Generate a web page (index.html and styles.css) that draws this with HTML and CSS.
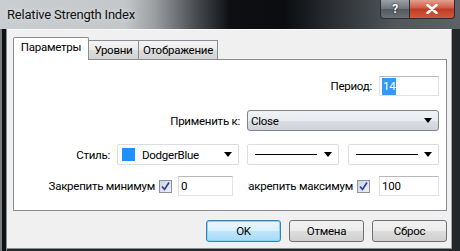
FILE: index.html
```html
<!DOCTYPE html>
<html lang="ru">
<head>
  <meta charset="UTF-8">
  <title>Relative Strength Index</title>
  <link rel="stylesheet" href="styles.css">
</head>
<body>
  <div class="window">
    <div class="titlebar">
      <span class="title">Relative Strength Index</span>
      <div class="caption-btns">
        <div class="cbtn help">?</div>
        <div class="cbtn close">
          <svg width="12" height="10" viewBox="0 0 12 10">
            <path d="M1.5 1 L10.5 9 M10.5 1 L1.5 9" stroke="#fff" stroke-width="2.6" stroke-linecap="round"/>
          </svg>
        </div>
      </div>
    </div>

    <div class="client">
      <div class="tabs">
        <div class="tab active tab-params">Параметры</div>
        <div class="tab tab-levels">Уровни</div>
        <div class="tab tab-view">Отображение</div>
      </div>

      <div class="panel">
        <div class="row row-period">
          <label class="lbl gap7">Период:</label>
          <div class="field w60"><span class="sel-text">14</span></div>
        </div>

        <div class="row row-apply">
          <label class="lbl gap7">Применить к:</label>
          <div class="combo combo-ro w192">
            <span>Close</span>
            <svg class="arrow" width="8" height="5" viewBox="0 0 8 5"><path d="M0 0 H8 L4 5 Z" fill="#000"/></svg>
          </div>
        </div>

        <div class="row row-style">
          <label class="lbl gap7">Стиль:</label>
          <div class="combo w122">
            <span class="swatch"></span>
            <span>DodgerBlue</span>
            <svg class="arrow" width="8" height="5" viewBox="0 0 8 5"><path d="M0 0 H8 L4 5 Z" fill="#000"/></svg>
          </div>
          <div class="combo w92 ml8">
            <span class="line"></span>
            <svg class="arrow" width="8" height="5" viewBox="0 0 8 5"><path d="M0 0 H8 L4 5 Z" fill="#000"/></svg>
          </div>
          <div class="combo w91 ml9">
            <span class="line"></span>
            <svg class="arrow" width="8" height="5" viewBox="0 0 8 5"><path d="M0 0 H8 L4 5 Z" fill="#000"/></svg>
          </div>
        </div>

        <div class="row row-fix">
          <label class="lbl gap4">Закрепить минимум</label>
          <span class="check">
            <svg width="9" height="9" viewBox="0 0 9 9"><path d="M1 4.5 L3.5 7.5 L8 0.5" stroke="#2a3d8f" stroke-width="1.6" fill="none"/></svg>
          </span>
          <div class="field w55 ml6"><span>0</span></div>
          <label class="lbl clip ml15">Закрепить максимум</label>
          <span class="check ml4">
            <svg width="9" height="9" viewBox="0 0 9 9"><path d="M1 4.5 L3.5 7.5 L8 0.5" stroke="#2a3d8f" stroke-width="1.6" fill="none"/></svg>
          </span>
          <div class="field w60 ml9"><span>100</span></div>
        </div>
      </div>

      <div class="actions">
        <button class="btn default">OK</button>
        <button class="btn">Отмена</button>
        <button class="btn">Сброс</button>
      </div>
    </div>
  </div>
</body>
</html>
```

FILE: styles.css
```css
body {
  margin: 0;
  background: #1e2124;
  font-family: Roboto, "Liberation Sans", sans-serif;
  font-size: 11.5px;
  letter-spacing: -0.25px;
  color: #000;
}
.window {
  width: 460px;
  height: 251px;
  overflow: hidden;
  background: linear-gradient(to right, #7a7d80 0 2px, #0e1012 2px 6px, #8d9094 6px 7px, transparent 7px), #24272a;
}

/* title bar */
.titlebar {
  height: 29px;
  display: flex;
  justify-content: space-between;
  align-items: flex-start;
  background: linear-gradient(to right, #cbced1 0, #c4c7ca 125px, #9a9ea1 155px, #4a4e52 195px, #0d0f13 230px, #0b0d10 285px, #2f3337 340px, #51565b 395px, #5d6266 460px);
}
.title {
  padding: 7px 0 0 7px;
  font-size: 13px;
  letter-spacing: -0.2px;
  color: #111;
  text-shadow: 0 0 5px #e6e8ea;
}
.caption-btns {
  display: flex;
  margin-right: 5px;
}
.cbtn {
  height: 19px;
  box-sizing: border-box;
  border: 1px solid #2b2e31;
  border-top: none;
  display: flex;
  align-items: center;
  justify-content: center;
  color: #fff;
  font-weight: bold;
  font-size: 12px;
}
.help {
  width: 30px;
  border-radius: 0 0 0 4px;
  background: linear-gradient(#9aa0a5, #6e747a 50%, #53595e 50%, #6a7075);
  text-shadow: 0 0 2px #000;
}
.close {
  width: 45px;
  border-left: none;
  border-radius: 0 0 4px 0;
  background: linear-gradient(#e3a090, #cc5a45 45%, #c03a26 50%, #d05a3c);
}

/* client area */
.client {
  margin-left: 7px;
  width: 445px;
  height: 220px;
  box-sizing: border-box;
  padding: 7px 4px 0 6px;
  background: #f0f0f0;
  border-top: 1px solid #fbfbfb;
  border-bottom: 1px solid #8a8d90;
  border-right: 1px solid #a3a6a9;
}
.tabs {
  display: flex;
  align-items: flex-end;
  height: 22px;
}
.tab {
  height: 19px;
  box-sizing: border-box;
  border: 1px solid #898c95;
  border-bottom: none;
  margin-left: -1px;
  display: flex;
  align-items: center;
  justify-content: center;
  background: linear-gradient(#f3f3f3, #ebebeb 50%, #dedede 50%, #d3d3d3);
}
.tab.active {
  height: 23px;
  margin-left: 0;
  margin-bottom: -1px;
  position: relative;
  z-index: 1;
  background: #fff;
  border-radius: 2px 2px 0 0;
  padding-bottom: 4px;
}
.tab-params { width: 76px; }
.tab-levels { width: 51px; }
.tab-view { width: 80px; }

.panel {
  height: 152px;
  box-sizing: border-box;
  border: 1px solid #898c95;
  background: #fff;
  padding: 16px 7px 0 0;
}
.row {
  display: flex;
  justify-content: flex-end;
  align-items: center;
}
.row-period { height: 20px; margin-bottom: 14px; }
.row-apply { height: 21px; margin-bottom: 13px; }
.row-style { height: 21px; margin-bottom: 11px; }
.row-fix { height: 20px; }

.lbl { white-space: nowrap; }
.gap7 { margin-right: 7px; }
.gap4 { margin-right: 4px; }
.ml4 { margin-left: 4px; }
.ml6 { margin-left: 6px; }
.ml8 { margin-left: 8px; }
.ml9 { margin-left: 9px; }
.ml15 { margin-left: 15px; }
.clip {
  width: 105px;
  display: flex;
  justify-content: flex-end;
  overflow: hidden;
}

.w55 { width: 55px; }
.w60 { width: 60px; }
.w91 { width: 91px; }
.w92 { width: 92px; }
.w122 { width: 122px; }
.w192 { width: 192px; }

.field {
  height: 20px;
  box-sizing: border-box;
  border: 1px solid #dfe3e8;
  border-top-color: #b5b8bd;
  background: #fff;
  display: flex;
  align-items: center;
  padding-left: 2px;
}
.sel-text {
  background: #3399ff;
  color: #fff;
  padding: 1px 1px;
  line-height: 15px;
}

.combo {
  height: 21px;
  box-sizing: border-box;
  border: 1px solid #dadde2;
  border-radius: 2px;
  background: #fff;
  display: flex;
  align-items: center;
  padding: 0 6px 0 4px;
}
.combo .arrow { margin-left: auto; }
.combo-ro {
  border-color: #7f8388;
  border-radius: 3px;
  background: linear-gradient(#f1f3f6, #e8ebef 50%, #dbdfe4 50%, #cfd3d9);
  padding-left: 3px;
}
.swatch {
  width: 13px;
  height: 13px;
  background: #1e90ff;
  margin-right: 7px;
}
.line {
  width: 62px;
  height: 1px;
  background: #000;
  margin-left: 3px;
}

.check {
  width: 13px;
  height: 13px;
  box-sizing: border-box;
  border: 1px solid #8e8f9a;
  background: linear-gradient(135deg, #cdd3e6, #eef0f8);
  display: flex;
  align-items: center;
  justify-content: center;
}

/* bottom buttons */
.actions {
  display: flex;
  justify-content: flex-end;
  gap: 8px;
  margin-top: 9px;
}
.btn {
  width: 75px;
  height: 22px;
  box-sizing: border-box;
  border: 1px solid #707070;
  border-radius: 3px;
  background: linear-gradient(#f2f2f2, #ebebeb 50%, #dddddd 50%, #cfcfcf);
  font: inherit;
  letter-spacing: inherit;
  color: #000;
  padding: 0;
}
.btn.default {
  border-color: #3c7fb1;
  box-shadow: inset 0 0 0 1px #7fd7f7;
  background: linear-gradient(#eaf6fd, #d9f0fc 50%, #bee6fd 50%, #a7d9f5);
}
```
